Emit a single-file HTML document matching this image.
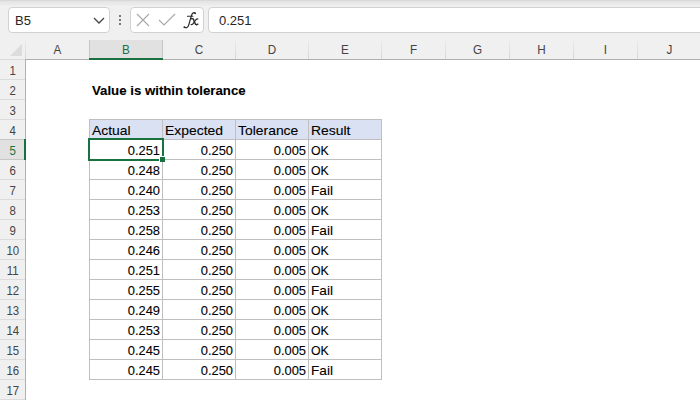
<!DOCTYPE html>
<html><head><meta charset="utf-8"><style>
*{box-sizing:border-box;margin:0;padding:0}
html,body{width:700px;height:400px;overflow:hidden;background:#fff;font-family:"Liberation Sans",sans-serif}
.a{position:absolute}
.box{background:#fff;border:1px solid #d1d1d1;border-radius:4px}
.ui{font-size:13px;color:#262626;line-height:18px;white-space:nowrap}
.hdr{top:40px;height:19px;font-size:13px;color:#444;text-align:center;line-height:19px;transform:scaleX(0.9)}
.cs{top:40px;width:1px;height:19px}
.rl{left:0;width:25.5px;height:19px;font-size:13px;color:#444;text-align:center;line-height:21px;transform:scaleX(0.88)}
.rs{left:0;width:25px;height:1px;background:#dcdcdc}
.c{font-size:13.5px;color:#000;height:19px;line-height:21px;white-space:nowrap;-webkit-text-stroke:0.1px #000}
.tl{background:#bfbfbf}
.n{font-size:12.9px}
</style></head><body>
<div class="a" style="left:0;top:0;width:700px;height:60px;background:#f0f0f0"></div>
<div class="a" style="left:0;top:0;width:700px;height:1px;background:#d9d9d9"></div>
<div class="a" style="left:0;top:1px;width:700px;height:1px;background:#e4e4e4"></div>
<div class="a" style="left:0;top:2px;width:700px;height:1px;background:#e7e7e7"></div>
<div class="a" style="left:0;top:3px;width:700px;height:1px;background:#e9e9e9"></div>
<div class="a" style="left:0;top:4px;width:700px;height:1px;background:#ebebeb"></div>
<div class="a" style="left:0;top:5px;width:700px;height:1px;background:#ededed"></div>
<div class="a" style="left:0;top:6px;width:700px;height:1px;background:#f1f1f1"></div>
<div class="a box" style="left:8px;top:7px;width:102px;height:26px"></div>
<div class="a ui" style="left:15px;top:12px">B5</div>
<svg class="a" style="left:92px;top:15px" width="14" height="10" viewBox="0 0 14 10"><path d="M2 3 L7 8 L12 3" fill="none" stroke="#444" stroke-width="1.3"/></svg>
<div class="a" style="left:119px;top:15px;width:2px;height:2px;background:#777"></div>
<div class="a" style="left:119px;top:19px;width:2px;height:2px;background:#777"></div>
<div class="a" style="left:119px;top:23px;width:2px;height:2px;background:#777"></div>
<div class="a box" style="left:130px;top:7px;width:74px;height:26px"></div>
<svg class="a" style="left:136px;top:13px" width="14" height="14" viewBox="0 0 14 14"><path d="M1 1 L13 13 M13 1 L1 13" fill="none" stroke="#a8a8a8" stroke-width="1.1"/></svg>
<svg class="a" style="left:158px;top:13px" width="18" height="14" viewBox="0 0 18 14"><path d="M1 7 L6 12 L17 1" fill="none" stroke="#a8a8a8" stroke-width="1.1"/></svg>
<svg class="a" style="left:180px;top:8px" width="22" height="22" viewBox="0 0 22 22"><g fill="none" stroke="#2b2b2b" stroke-linecap="round"><path d="M15.2 5.4 C14.9 4.5 13.6 4.3 12.6 5.3 C11.3 6.5 9.1 16.6 8.2 18.3 C7.4 19.8 6 20.1 4.4 19.3" stroke-width="1.2"/><path d="M7.4 8.3 L12.9 8.3" stroke-width="1.1"/><path d="M11.6 10.8 C12.9 10.3 13.5 11 13.9 12.4 L15.1 15.6 C15.5 16.8 16.4 17 17.8 16.2" stroke-width="1.45"/><path d="M17.9 11 C17 10.5 16.2 11.1 15.2 12.6 L13.1 15.6 C12.4 16.6 11.7 16.9 11 16.3" stroke-width="1.1"/></g><circle cx="15.1" cy="5.3" r="0.9" fill="#2b2b2b"/><circle cx="4.4" cy="19.2" r="0.9" fill="#2b2b2b"/></svg>
<div class="a box" style="left:208px;top:7px;width:510px;height:26px"></div>
<div class="a ui" style="left:219px;top:12px">0.251</div>
<div class="a" style="left:89px;top:40px;width:73px;height:18px;background:#e1e1e1"></div>
<svg class="a" style="left:10px;top:44px" width="12" height="12" viewBox="0 0 12 12"><path d="M12 0 L12 12 L0 12 Z" fill="#dcdcdc"/></svg>
<div class="a cs" style="left:25px;background:linear-gradient(#ececec,#d6d6d6)"></div>
<div class="a hdr" style="left:26px;width:63px">A</div>
<div class="a cs" style="left:89px;background:#c6c6c6"></div>
<div class="a hdr" style="left:90px;width:72px;color:#197140">B</div>
<div class="a cs" style="left:162px;background:#c6c6c6"></div>
<div class="a hdr" style="left:163px;width:72px">C</div>
<div class="a cs" style="left:235px;background:linear-gradient(#ececec,#d6d6d6)"></div>
<div class="a hdr" style="left:236px;width:72px">D</div>
<div class="a cs" style="left:308px;background:linear-gradient(#ececec,#d6d6d6)"></div>
<div class="a hdr" style="left:309px;width:72px">E</div>
<div class="a cs" style="left:381px;background:linear-gradient(#ececec,#d6d6d6)"></div>
<div class="a hdr" style="left:382px;width:63px">F</div>
<div class="a cs" style="left:445px;background:linear-gradient(#ececec,#d6d6d6)"></div>
<div class="a hdr" style="left:446px;width:63px">G</div>
<div class="a cs" style="left:509px;background:linear-gradient(#ececec,#d6d6d6)"></div>
<div class="a hdr" style="left:510px;width:63px">H</div>
<div class="a cs" style="left:573px;background:linear-gradient(#ececec,#d6d6d6)"></div>
<div class="a hdr" style="left:574px;width:63px">I</div>
<div class="a cs" style="left:637px;background:linear-gradient(#ececec,#d6d6d6)"></div>
<div class="a hdr" style="left:638px;width:63px">J</div>
<div class="a" style="left:25px;top:59px;width:675px;height:1px;background:#b0b0b0"></div>
<div class="a" style="left:0;top:59px;width:25px;height:1px;background:#dadada"></div>
<div class="a" style="left:89px;top:58px;width:74px;height:2px;background:#197140"></div>
<div class="a" style="left:0;top:60px;width:25px;height:340px;background:#f0f0f0"></div>
<div class="a rl" style="top:60px">1</div>
<div class="a rs" style="top:79px"></div>
<div class="a rl" style="top:80px">2</div>
<div class="a rs" style="top:99px"></div>
<div class="a rl" style="top:100px">3</div>
<div class="a rs" style="top:119px"></div>
<div class="a rl" style="top:120px">4</div>
<div class="a" style="left:0;top:140px;width:25px;height:19px;background:#e1e1e1"></div>
<div class="a" style="left:0;top:139px;width:25px;height:1px;background:#c6c6c6"></div>
<div class="a" style="left:0;top:159px;width:25px;height:1px;background:#c6c6c6"></div>
<div class="a rl" style="top:140px;color:#197140">5</div>
<div class="a rl" style="top:160px">6</div>
<div class="a rs" style="top:179px"></div>
<div class="a rl" style="top:180px">7</div>
<div class="a rs" style="top:199px"></div>
<div class="a rl" style="top:200px">8</div>
<div class="a rs" style="top:219px"></div>
<div class="a rl" style="top:220px">9</div>
<div class="a rs" style="top:239px"></div>
<div class="a rl" style="top:240px">10</div>
<div class="a rs" style="top:259px"></div>
<div class="a rl" style="top:260px">11</div>
<div class="a rs" style="top:279px"></div>
<div class="a rl" style="top:280px">12</div>
<div class="a rs" style="top:299px"></div>
<div class="a rl" style="top:300px">13</div>
<div class="a rs" style="top:319px"></div>
<div class="a rl" style="top:320px">14</div>
<div class="a rs" style="top:339px"></div>
<div class="a rl" style="top:340px">15</div>
<div class="a rs" style="top:359px"></div>
<div class="a rl" style="top:360px">16</div>
<div class="a rs" style="top:379px"></div>
<div class="a rl" style="top:380px">17</div>
<div class="a rs" style="top:399px"></div>
<div class="a" style="left:25px;top:59px;width:1px;height:341px;background:#b0b0b0"></div>
<div class="a" style="left:24px;top:139px;width:2px;height:21px;background:#197140"></div>
<div class="a c" style="left:92px;top:81px;font-weight:bold;font-size:12.6px;transform:scaleX(1.05);transform-origin:0 0">Value is within tolerance</div>
<div class="a" style="left:90px;top:120px;width:291px;height:19px;background:#d9e1f2"></div>
<div class="a tl" style="left:89px;top:119px;width:1px;height:261px"></div>
<div class="a tl" style="left:162px;top:119px;width:1px;height:261px"></div>
<div class="a tl" style="left:235px;top:119px;width:1px;height:261px"></div>
<div class="a tl" style="left:308px;top:119px;width:1px;height:261px"></div>
<div class="a tl" style="left:381px;top:119px;width:1px;height:261px"></div>
<div class="a tl" style="left:89px;top:119px;width:293px;height:1px"></div>
<div class="a tl" style="left:89px;top:139px;width:293px;height:1px"></div>
<div class="a tl" style="left:89px;top:159px;width:293px;height:1px"></div>
<div class="a tl" style="left:89px;top:179px;width:293px;height:1px"></div>
<div class="a tl" style="left:89px;top:199px;width:293px;height:1px"></div>
<div class="a tl" style="left:89px;top:219px;width:293px;height:1px"></div>
<div class="a tl" style="left:89px;top:239px;width:293px;height:1px"></div>
<div class="a tl" style="left:89px;top:259px;width:293px;height:1px"></div>
<div class="a tl" style="left:89px;top:279px;width:293px;height:1px"></div>
<div class="a tl" style="left:89px;top:299px;width:293px;height:1px"></div>
<div class="a tl" style="left:89px;top:319px;width:293px;height:1px"></div>
<div class="a tl" style="left:89px;top:339px;width:293px;height:1px"></div>
<div class="a tl" style="left:89px;top:359px;width:293px;height:1px"></div>
<div class="a tl" style="left:89px;top:379px;width:293px;height:1px"></div>
<div class="a c" style="left:92px;top:120px;font-size:13px;transform:scaleX(1.07);transform-origin:0 0">Actual</div>
<div class="a c" style="left:165px;top:120px;font-size:13px;transform:scaleX(1.07);transform-origin:0 0">Expected</div>
<div class="a c" style="left:238px;top:120px;font-size:13px;transform:scaleX(1.07);transform-origin:0 0">Tolerance</div>
<div class="a c" style="left:311px;top:120px;font-size:13px;transform:scaleX(1.07);transform-origin:0 0">Result</div>
<div class="a c n" style="left:89px;width:71px;text-align:right;top:140px">0.251</div>
<div class="a c n" style="left:162px;width:71px;text-align:right;top:140px">0.250</div>
<div class="a c n" style="left:235px;width:71px;text-align:right;top:140px">0.005</div>
<div class="a c" style="left:311px;top:140px;font-size:13px;transform:scaleX(0.95);transform-origin:0 0">OK</div>
<div class="a c n" style="left:89px;width:71px;text-align:right;top:160px">0.248</div>
<div class="a c n" style="left:162px;width:71px;text-align:right;top:160px">0.250</div>
<div class="a c n" style="left:235px;width:71px;text-align:right;top:160px">0.005</div>
<div class="a c" style="left:311px;top:160px;font-size:13px;transform:scaleX(0.95);transform-origin:0 0">OK</div>
<div class="a c n" style="left:89px;width:71px;text-align:right;top:180px">0.240</div>
<div class="a c n" style="left:162px;width:71px;text-align:right;top:180px">0.250</div>
<div class="a c n" style="left:235px;width:71px;text-align:right;top:180px">0.005</div>
<div class="a c" style="left:311px;top:180px;font-size:13px;transform:scaleX(1.05);transform-origin:0 0">Fail</div>
<div class="a c n" style="left:89px;width:71px;text-align:right;top:200px">0.253</div>
<div class="a c n" style="left:162px;width:71px;text-align:right;top:200px">0.250</div>
<div class="a c n" style="left:235px;width:71px;text-align:right;top:200px">0.005</div>
<div class="a c" style="left:311px;top:200px;font-size:13px;transform:scaleX(0.95);transform-origin:0 0">OK</div>
<div class="a c n" style="left:89px;width:71px;text-align:right;top:220px">0.258</div>
<div class="a c n" style="left:162px;width:71px;text-align:right;top:220px">0.250</div>
<div class="a c n" style="left:235px;width:71px;text-align:right;top:220px">0.005</div>
<div class="a c" style="left:311px;top:220px;font-size:13px;transform:scaleX(1.05);transform-origin:0 0">Fail</div>
<div class="a c n" style="left:89px;width:71px;text-align:right;top:240px">0.246</div>
<div class="a c n" style="left:162px;width:71px;text-align:right;top:240px">0.250</div>
<div class="a c n" style="left:235px;width:71px;text-align:right;top:240px">0.005</div>
<div class="a c" style="left:311px;top:240px;font-size:13px;transform:scaleX(0.95);transform-origin:0 0">OK</div>
<div class="a c n" style="left:89px;width:71px;text-align:right;top:260px">0.251</div>
<div class="a c n" style="left:162px;width:71px;text-align:right;top:260px">0.250</div>
<div class="a c n" style="left:235px;width:71px;text-align:right;top:260px">0.005</div>
<div class="a c" style="left:311px;top:260px;font-size:13px;transform:scaleX(0.95);transform-origin:0 0">OK</div>
<div class="a c n" style="left:89px;width:71px;text-align:right;top:280px">0.255</div>
<div class="a c n" style="left:162px;width:71px;text-align:right;top:280px">0.250</div>
<div class="a c n" style="left:235px;width:71px;text-align:right;top:280px">0.005</div>
<div class="a c" style="left:311px;top:280px;font-size:13px;transform:scaleX(1.05);transform-origin:0 0">Fail</div>
<div class="a c n" style="left:89px;width:71px;text-align:right;top:300px">0.249</div>
<div class="a c n" style="left:162px;width:71px;text-align:right;top:300px">0.250</div>
<div class="a c n" style="left:235px;width:71px;text-align:right;top:300px">0.005</div>
<div class="a c" style="left:311px;top:300px;font-size:13px;transform:scaleX(0.95);transform-origin:0 0">OK</div>
<div class="a c n" style="left:89px;width:71px;text-align:right;top:320px">0.253</div>
<div class="a c n" style="left:162px;width:71px;text-align:right;top:320px">0.250</div>
<div class="a c n" style="left:235px;width:71px;text-align:right;top:320px">0.005</div>
<div class="a c" style="left:311px;top:320px;font-size:13px;transform:scaleX(0.95);transform-origin:0 0">OK</div>
<div class="a c n" style="left:89px;width:71px;text-align:right;top:340px">0.245</div>
<div class="a c n" style="left:162px;width:71px;text-align:right;top:340px">0.250</div>
<div class="a c n" style="left:235px;width:71px;text-align:right;top:340px">0.005</div>
<div class="a c" style="left:311px;top:340px;font-size:13px;transform:scaleX(0.95);transform-origin:0 0">OK</div>
<div class="a c n" style="left:89px;width:71px;text-align:right;top:360px">0.245</div>
<div class="a c n" style="left:162px;width:71px;text-align:right;top:360px">0.250</div>
<div class="a c n" style="left:235px;width:71px;text-align:right;top:360px">0.005</div>
<div class="a c" style="left:311px;top:360px;font-size:13px;transform:scaleX(1.05);transform-origin:0 0">Fail</div>
<div class="a" style="left:88px;top:138px;width:76px;height:23px;border:2px solid #197140"></div>
<div class="a" style="left:159px;top:156px;width:6px;height:6px;background:#fff"></div>
<div class="a" style="left:160px;top:157px;width:5px;height:5px;background:#197140"></div>
</body></html>
